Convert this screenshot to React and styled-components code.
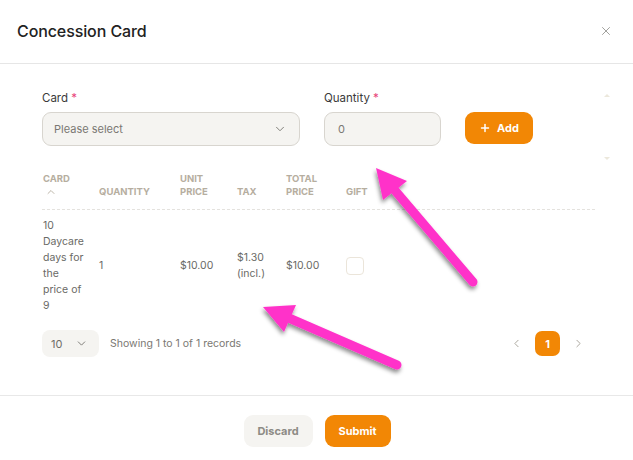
import React from "react";
import styled, { createGlobalStyle } from "styled-components";
import { ChevronDown, ChevronUp, ChevronLeft, ChevronRight, Plus, X } from "lucide-react";

const GlobalStyle = createGlobalStyle`
  html, body {
    margin: 0;
    padding: 0;
    background: #fff;
  }
  body {
    font-family: Inter, "Noto Sans", sans-serif;
    color: #2a2a2a;
  }
  * {
    box-sizing: border-box;
  }
`;

const ORANGE = "#f28705";
const BEIGE = "#f5f4f1";

const Modal = styled.div`
  position: relative;
  width: 633px;
  height: 460px;
  overflow: hidden;
  background: #fff;
  display: flex;
  flex-direction: column;
`;

const Header = styled.div`
  height: 64px;
  flex-shrink: 0;
  display: flex;
  align-items: center;
  justify-content: space-between;
  padding: 0 20px 2px 17px;
  border-bottom: 1px solid #e6e6e6;
`;

const Title = styled.h2`
  margin: 0;
  font-size: 16px;
  font-weight: 500;
  color: #222;
  letter-spacing: -0.1px;
`;

const CloseButton = styled.button`
  border: none;
  background: none;
  padding: 0;
  display: flex;
  color: #9a9a96;
  cursor: pointer;
`;

const Body = styled.div`
  flex: 1;
  padding: 26px 38px 0 42px;
  border-bottom: 1px solid #e8e8e8;
`;

const FormRow = styled.div`
  position: relative;
  display: flex;
  align-items: flex-end;
  gap: 24px;
  padding-right: 20px;
`;

const ScrollArrow = styled.span`
  position: absolute;
  right: -15px;
  ${(p) => (p.$down ? "bottom: -14px;" : "top: 4px;")}
  width: 0;
  height: 0;
  border-left: 3px solid transparent;
  border-right: 3px solid transparent;
  ${(p) =>
    p.$down ? "border-top: 3px solid #ece8dc;" : "border-bottom: 3px solid #ece8dc;"}
`;

const Field = styled.div`
  display: flex;
  flex-direction: column;
  gap: 6px;
  width: ${(p) => p.$width}px;
`;

const Label = styled.label`
  font-size: 11.5px;
  line-height: 16px;
  color: #3a3a3a;

  span {
    color: #e8457a;
  }
`;

const SelectBox = styled.div`
  height: 34px;
  border-radius: 9px;
  border: 1px solid #d8d5cf;
  background: ${BEIGE};
  display: flex;
  align-items: center;
  justify-content: space-between;
  padding: 0 12px 0 11px;
  font-size: 11px;
  color: #7a7873;
`;

const Input = styled.input`
  height: 34px;
  border-radius: 9px;
  border: 1px solid #d8d5cf;
  background: ${BEIGE};
  padding: 0 13px;
  font-family: Inter, sans-serif;
  font-size: 11px;
  color: #7a7873;
  outline: none;
  width: 100%;
`;

const PrimaryButton = styled.button`
  height: 32px;
  min-width: ${(p) => p.$width || 66}px;
  margin-bottom: 2px;
  border: none;
  border-radius: 9px;
  background: ${ORANGE};
  color: #fff;
  font-family: Inter, sans-serif;
  font-size: 11px;
  font-weight: 700;
  display: flex;
  align-items: center;
  justify-content: center;
  gap: 6px;
  cursor: pointer;
`;

const GhostButton = styled(PrimaryButton)`
  background: ${BEIGE};
  color: #8d8b85;
`;

const Table = styled.div`
  margin-top: 26px;
  width: 553px;
`;

const cols = "56px 81px 57px 49px 60px 1fr";

const HeadRow = styled.div`
  display: grid;
  grid-template-columns: ${cols};
  align-items: end;
  padding-bottom: 11px;
  border-bottom: 1px dashed #e4e2de;
`;

const HeadCell = styled.div`
  font-size: 9.5px;
  font-weight: 700;
  line-height: 13px;
  color: #b6ae9f;
  text-transform: uppercase;
  padding-left: 1px;
`;

const SortIcon = styled.div`
  display: flex;
  padding-left: 2px;
  height: 13px;
  align-items: center;
  color: #b6ae9f;
`;

const Row = styled.div`
  display: grid;
  grid-template-columns: ${cols};
  align-items: center;
  padding: 8px 0 6px;
`;

const Cell = styled.div`
  font-size: 10.5px;
  line-height: 16px;
  color: #6a6a66;
  padding-left: 1px;
  padding-right: ${(p) => (p.$wrap ? 13 : 6)}px;
`;

const Checkbox = styled.div`
  width: 18px;
  height: 18px;
  border: 1px solid #ebe5da;
  border-radius: 4px;
  background: #fff;
`;

const TableFooter = styled.div`
  display: flex;
  align-items: center;
  justify-content: space-between;
  margin-top: 10px;
`;

const Left = styled.div`
  display: flex;
  align-items: center;
  gap: 11px;
`;

const PageSize = styled.div`
  width: 57px;
  height: 27px;
  border-radius: 8px;
  background: ${BEIGE};
  display: flex;
  align-items: center;
  justify-content: space-between;
  padding: 0 11px 0 9px;
  font-size: 11px;
  color: #6f6d68;
`;

const Info = styled.span`
  font-size: 10.5px;
  color: #7a7873;
`;

const Pager = styled.div`
  display: flex;
  align-items: center;
  gap: 12px;
  color: #aaa69c;
  padding-right: 10px;
`;

const PageButton = styled.div`
  width: 25px;
  height: 25px;
  border-radius: 7px;
  background: ${ORANGE};
  color: #fff;
  font-size: 11px;
  font-weight: 700;
  display: flex;
  align-items: center;
  justify-content: center;
`;

const Footer = styled.div`
  height: 64px;
  flex-shrink: 0;
  display: flex;
  justify-content: center;
  align-items: flex-start;
  padding-top: 19px;
  padding-left: 1px;
  gap: 12px;
`;

const Overlay = styled.svg`
  position: absolute;
  inset: 0;
  pointer-events: none;
`;

const Arrow = ({ tip, c1, c2, end }) => {
  const mid = [(c1[0] + c2[0]) / 2, (c1[1] + c2[1]) / 2];
  return (
    <g filter="url(#shadow)">
      <line
        x1={mid[0]}
        y1={mid[1]}
        x2={end[0]}
        y2={end[1]}
        stroke="#ff33c9"
        strokeWidth="9"
        strokeLinecap="round"
      />
      <polygon points={`${tip.join(",")} ${c1.join(",")} ${c2.join(",")}`} fill="#ff33c9" />
    </g>
  );
};

export default function App() {
  return (
    <>
      <GlobalStyle />
      <Modal>
        <Header>
          <Title>Concession Card</Title>
          <CloseButton>
            <X size={14} strokeWidth={1.6} />
          </CloseButton>
        </Header>
        <Body>
          <FormRow>
            <Field $width={258}>
              <Label>
                Card <span>*</span>
              </Label>
              <SelectBox>
                Please select
                <ChevronDown size={14} strokeWidth={1.6} color="#7a7873" />
              </SelectBox>
            </Field>
            <Field $width={117}>
              <Label>
                Quantity <span>*</span>
              </Label>
              <Input defaultValue="0" />
            </Field>
            <PrimaryButton $width={68}>
              <Plus size={12} strokeWidth={3} />
              Add
            </PrimaryButton>
            <ScrollArrow />
            <ScrollArrow $down />
          </FormRow>

          <Table>
            <HeadRow>
              <HeadCell>
                Card
                <SortIcon>
                  <ChevronUp size={12} strokeWidth={1.8} />
                </SortIcon>
              </HeadCell>
              <HeadCell>Quantity</HeadCell>
              <HeadCell>
                Unit
                <br />
                Price
              </HeadCell>
              <HeadCell>Tax</HeadCell>
              <HeadCell>
                Total
                <br />
                Price
              </HeadCell>
              <HeadCell>Gift</HeadCell>
            </HeadRow>
            <Row>
              <Cell $wrap>10 Daycare days for the price of 9</Cell>
              <Cell>1</Cell>
              <Cell>$10.00</Cell>
              <Cell>
                $1.30
                <br />
                (incl.)
              </Cell>
              <Cell>$10.00</Cell>
              <Cell>
                <Checkbox />
              </Cell>
            </Row>
          </Table>

          <TableFooter>
            <Left>
              <PageSize>
                10
                <ChevronDown size={13} strokeWidth={1.6} />
              </PageSize>
              <Info>Showing 1 to 1 of 1 records</Info>
            </Left>
            <Pager>
              <ChevronLeft size={13} strokeWidth={1.8} />
              <PageButton>1</PageButton>
              <ChevronRight size={13} strokeWidth={1.8} />
            </Pager>
          </TableFooter>
        </Body>
        <Footer>
          <GhostButton $width={69}>Discard</GhostButton>
          <PrimaryButton $width={66}>Submit</PrimaryButton>
        </Footer>

        <Overlay width="633" height="460" viewBox="0 0 633 460">
          <defs>
            <filter id="shadow" x="-20%" y="-20%" width="140%" height="140%">
              <feDropShadow dx="-1" dy="3" stdDeviation="2.2" floodColor="#000" floodOpacity="0.45" />
            </filter>
          </defs>
          <Arrow tip={[376, 168]} c1={[407, 181]} c2={[383, 200]} end={[473, 282]} />
          <Arrow tip={[263, 307]} c1={[296, 305]} c2={[284, 332]} end={[397, 365]} />
        </Overlay>
      </Modal>
    </>
  );
}
